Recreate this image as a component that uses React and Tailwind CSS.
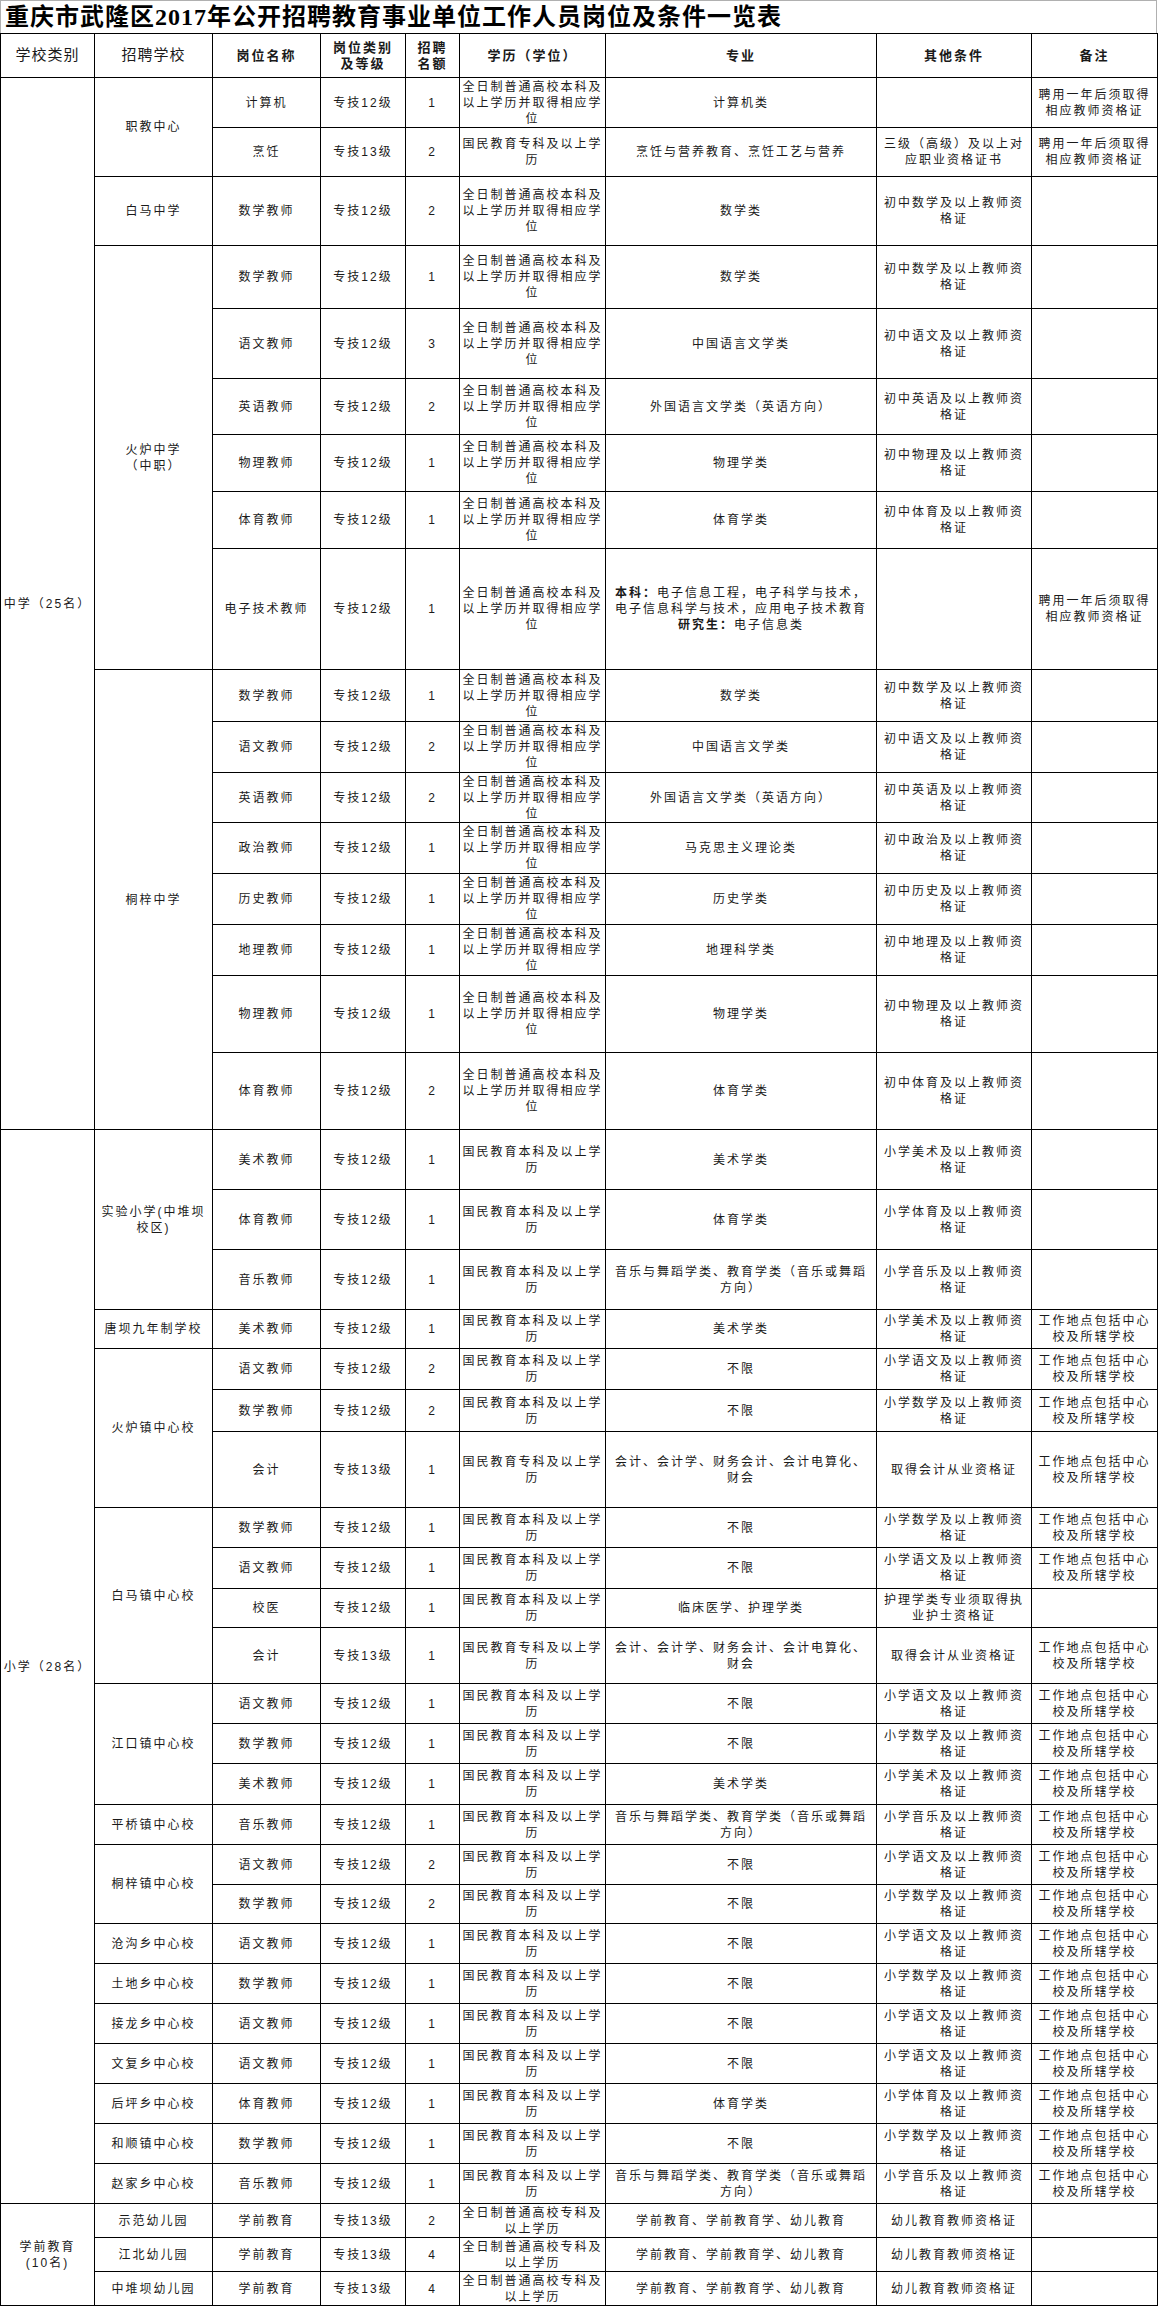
import React from "react";

const A = ["全日制普通高校本科及", "以上学历并取得相应学", "位"];
const B = ["国民教育专科及以上学", "历"];
const C = ["国民教育本科及以上学", "历"];
const D = ["全日制普通高校专科及", "以上学历"];
const NOTE1 = ["聘用一年后须取得", "相应教师资格证"];
const WORK = ["工作地点包括中心", "校及所辖学校"];
const MUSIC = ["音乐与舞蹈学类、教育学类（音乐或舞蹈", "方向）"];
const ACC = ["会计、会计学、财务会计、会计电算化、", "财会"];
const cz = (s) => [`初中${s}及以上教师资`, "格证"];
const xx = (s) => [`小学${s}及以上教师资`, "格证"];

const ELEC = [
  <>
    <b className="font-bold">本科：</b>电子信息工程，电子科学与技术，
  </>,
  "电子信息科学与技术，应用电子技术教育",
  <>
    <b className="font-bold">研究生：</b>电子信息类
  </>,
];

const r = (h, pos, grade, num, edu, major, other, note) => ({
  h, pos, grade, num, edu, major, other, note,
});

const groups = [
  {
    cat: ["中学（25名）"],
    schools: [
      {
        name: ["职教中心"],
        rows: [
          r(50, "计算机", "专技12级", "1", A, ["计算机类"], [], NOTE1),
          r(49, "烹饪", "专技13级", "2", B, ["烹饪与营养教育、烹饪工艺与营养"], ["三级（高级）及以上对", "应职业资格证书"], NOTE1),
        ],
      },
      {
        name: ["白马中学"],
        rows: [r(69, "数学教师", "专技12级", "2", A, ["数学类"], cz("数学"), [])],
      },
      {
        name: ["火炉中学", "（中职）"],
        rows: [
          r(63, "数学教师", "专技12级", "1", A, ["数学类"], cz("数学"), []),
          r(70, "语文教师", "专技12级", "3", A, ["中国语言文学类"], cz("语文"), []),
          r(56, "英语教师", "专技12级", "2", A, ["外国语言文学类（英语方向）"], cz("英语"), []),
          r(57, "物理教师", "专技12级", "1", A, ["物理学类"], cz("物理"), []),
          r(57, "体育教师", "专技12级", "1", A, ["体育学类"], cz("体育"), []),
          r(121, "电子技术教师", "专技12级", "1", A, ELEC, [], NOTE1),
        ],
      },
      {
        name: ["桐梓中学"],
        rows: [
          r(52, "数学教师", "专技12级", "1", A, ["数学类"], cz("数学"), []),
          r(51, "语文教师", "专技12级", "2", A, ["中国语言文学类"], cz("语文"), []),
          r(50, "英语教师", "专技12级", "2", A, ["外国语言文学类（英语方向）"], cz("英语"), []),
          r(51, "政治教师", "专技12级", "1", A, ["马克思主义理论类"], cz("政治"), []),
          r(51, "历史教师", "专技12级", "1", A, ["历史学类"], cz("历史"), []),
          r(51, "地理教师", "专技12级", "1", A, ["地理科学类"], cz("地理"), []),
          r(77, "物理教师", "专技12级", "1", A, ["物理学类"], cz("物理"), []),
          r(77, "体育教师", "专技12级", "2", A, ["体育学类"], cz("体育"), []),
        ],
      },
    ],
  },
  {
    cat: ["小学（28名）"],
    schools: [
      {
        name: ["实验小学(中堆坝", "校区)"],
        rows: [
          r(60, "美术教师", "专技12级", "1", C, ["美术学类"], xx("美术"), []),
          r(60, "体育教师", "专技12级", "1", C, ["体育学类"], xx("体育"), []),
          r(60, "音乐教师", "专技12级", "1", C, MUSIC, xx("音乐"), []),
        ],
      },
      {
        name: ["唐坝九年制学校"],
        rows: [r(39, "美术教师", "专技12级", "1", C, ["美术学类"], xx("美术"), WORK)],
      },
      {
        name: ["火炉镇中心校"],
        rows: [
          r(41, "语文教师", "专技12级", "2", C, ["不限"], xx("语文"), WORK),
          r(42, "数学教师", "专技12级", "2", C, ["不限"], xx("数学"), WORK),
          r(76, "会计", "专技13级", "1", B, ACC, ["取得会计从业资格证"], WORK),
        ],
      },
      {
        name: ["白马镇中心校"],
        rows: [
          r(40, "数学教师", "专技12级", "1", C, ["不限"], xx("数学"), WORK),
          r(41, "语文教师", "专技12级", "1", C, ["不限"], xx("语文"), WORK),
          r(39, "校医", "专技12级", "1", C, ["临床医学、护理学类"], ["护理学类专业须取得执", "业护士资格证"], []),
          r(56, "会计", "专技13级", "1", B, ACC, ["取得会计从业资格证"], WORK),
        ],
      },
      {
        name: ["江口镇中心校"],
        rows: [
          r(40, "语文教师", "专技12级", "1", C, ["不限"], xx("语文"), WORK),
          r(40, "数学教师", "专技12级", "1", C, ["不限"], xx("数学"), WORK),
          r(41, "美术教师", "专技12级", "1", C, ["美术学类"], xx("美术"), WORK),
        ],
      },
      {
        name: ["平桥镇中心校"],
        rows: [r(40, "音乐教师", "专技12级", "1", C, MUSIC, xx("音乐"), WORK)],
      },
      {
        name: ["桐梓镇中心校"],
        rows: [
          r(40, "语文教师", "专技12级", "2", C, ["不限"], xx("语文"), WORK),
          r(39, "数学教师", "专技12级", "2", C, ["不限"], xx("数学"), WORK),
        ],
      },
      { name: ["沧沟乡中心校"], rows: [r(40, "语文教师", "专技12级", "1", C, ["不限"], xx("语文"), WORK)] },
      { name: ["土地乡中心校"], rows: [r(40, "数学教师", "专技12级", "1", C, ["不限"], xx("数学"), WORK)] },
      { name: ["接龙乡中心校"], rows: [r(40, "语文教师", "专技12级", "1", C, ["不限"], xx("语文"), WORK)] },
      { name: ["文复乡中心校"], rows: [r(40, "语文教师", "专技12级", "1", C, ["不限"], xx("语文"), WORK)] },
      { name: ["后坪乡中心校"], rows: [r(40, "体育教师", "专技12级", "1", C, ["体育学类"], xx("体育"), WORK)] },
      { name: ["和顺镇中心校"], rows: [r(40, "数学教师", "专技12级", "1", C, ["不限"], xx("数学"), WORK)] },
      { name: ["赵家乡中心校"], rows: [r(40, "音乐教师", "专技12级", "1", C, MUSIC, xx("音乐"), WORK)] },
    ],
  },
  {
    cat: ["学前教育", "(10名)"],
    schools: [
      { name: ["示范幼儿园"], rows: [r(34, "学前教育", "专技13级", "2", D, ["学前教育、学前教育学、幼儿教育"], ["幼儿教育教师资格证"], [])] },
      { name: ["江北幼儿园"], rows: [r(34, "学前教育", "专技13级", "4", D, ["学前教育、学前教育学、幼儿教育"], ["幼儿教育教师资格证"], [])] },
      { name: ["中堆坝幼儿园"], rows: [r(34, "学前教育", "专技13级", "4", D, ["学前教育、学前教育学、幼儿教育"], ["幼儿教育教师资格证"], [])] },
    ],
  },
];

const Lines = ({ lines }) => (
  <>
    {lines.map((l, i) => (
      <React.Fragment key={i}>
        {i > 0 && <br />}
        {l}
      </React.Fragment>
    ))}
  </>
);

const td =
  "border border-black text-center align-middle whitespace-nowrap px-[1px] text-[12px] leading-[16px] tracking-[2px] font-normal";
const th =
  "border border-black text-center align-middle whitespace-nowrap px-[1px] text-[13px] leading-[16px] tracking-[2px] font-bold";

export default function App() {
  const body = [];
  groups.forEach((g, gi) => {
    const catSpan = g.schools.reduce((s, sc) => s + sc.rows.length, 0);
    g.schools.forEach((sc, si) => {
      sc.rows.forEach((row, ri) => {
        body.push(
          <tr key={`${gi}-${si}-${ri}`} style={{ height: row.h }}>
            {si === 0 && ri === 0 && (
              <td rowSpan={catSpan} className={td}>
                <Lines lines={g.cat} />
              </td>
            )}
            {ri === 0 && (
              <td rowSpan={sc.rows.length} className={td}>
                <Lines lines={sc.name} />
              </td>
            )}
            <td className={td}>{row.pos}</td>
            <td className={td}>{row.grade}</td>
            <td className={td}>{row.num}</td>
            <td className={td}>
              <Lines lines={row.edu} />
            </td>
            <td className={td}>
              <Lines lines={row.major} />
            </td>
            <td className={td}>
              <Lines lines={row.other} />
            </td>
            <td className={td}>
              <Lines lines={row.note} />
            </td>
          </tr>
        );
      });
    });
  });

  return (
    <div
      className="w-[1158px] h-[2308px] bg-white text-[#1a1a1a]"
      style={{ fontFamily: '"Liberation Sans", "Noto Sans CJK SC", sans-serif' }}
    >
      <div
        className="w-[1157px] h-[33px] border-t border-l border-r border-[#b0b0b0] flex items-center pl-[4px] text-[24px] font-bold tracking-[1px] text-black"
        style={{ fontFamily: '"Liberation Serif", "Noto Sans CJK SC", serif' }}
      >
        重庆市武隆区2017年公开招聘教育事业单位工作人员岗位及条件一览表
      </div>
      <table className="w-[1157px] table-fixed border-collapse">
        <colgroup>
          <col className="w-[94px]" />
          <col className="w-[118px]" />
          <col className="w-[108px]" />
          <col className="w-[85px]" />
          <col className="w-[54px]" />
          <col className="w-[146px]" />
          <col className="w-[271px]" />
          <col className="w-[155px]" />
          <col className="w-[126px]" />
        </colgroup>
        <thead>
          <tr style={{ height: 44 }}>
            <th className="border border-black text-center align-middle whitespace-nowrap text-[15px] font-normal tracking-[1px]">
              学校类别
            </th>
            <th className="border border-black text-center align-middle whitespace-nowrap text-[15px] font-normal tracking-[1px]">
              招聘学校
            </th>
            <th className={th}>岗位名称</th>
            <th className={th}>
              岗位类别
              <br />
              及等级
            </th>
            <th className={th}>
              招聘
              <br />
              名额
            </th>
            <th className={th}>学历（学位）</th>
            <th className={th}>专业</th>
            <th className={th}>其他条件</th>
            <th className={th}>备注</th>
          </tr>
        </thead>
        <tbody>{body}</tbody>
      </table>
    </div>
  );
}
